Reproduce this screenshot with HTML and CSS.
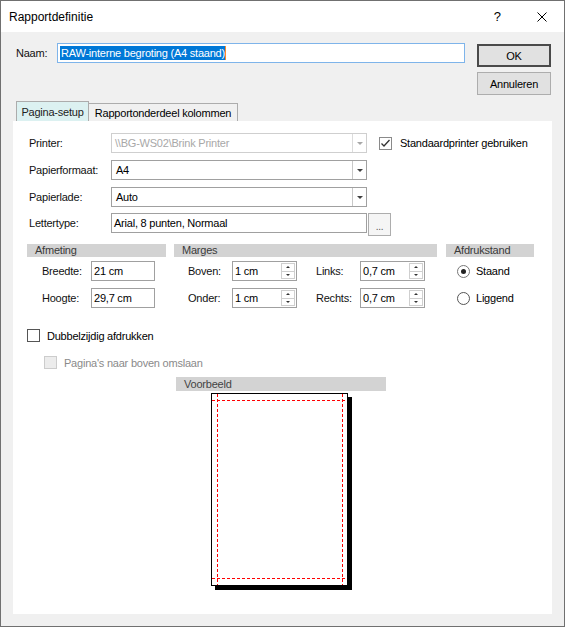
FILE: index.html
```html
<!DOCTYPE html>
<html>
<head>
<meta charset="utf-8">
<link rel="stylesheet" href="styles.css">
</head>
<body>
<div class="window">
  <div class="titlebar">
    <span class="title">Rapportdefinitie</span>
    <span class="help">?</span>
    <svg class="close" width="10" height="10" viewBox="0 0 10 10"><path d="M0.5 0.5 L9.5 9.5 M9.5 0.5 L0.5 9.5" stroke="#000" stroke-width="1"/></svg>
  </div>
  <div class="top">
    <div class="naam">
      <span class="naam-label">Naam:</span>
      <div class="naam-input"><span class="sel">RAW-interne begroting (A4 staand)</span><span class="caret"></span></div>
    </div>
    <div class="buttons">
      <div class="btn ok">OK</div>
      <div class="btn">Annuleren</div>
    </div>
  </div>
  <div class="tabs">
    <div class="tab active">Pagina-setup</div>
    <div class="tab second">Rapportonderdeel kolommen</div>
  </div>
  <div class="panel">
    <div class="field-row r1">
      <span class="lbl">Printer:</span>
      <div class="combo disabled"><span class="combo-text">\\BG-WS02\Brink Printer</span><span class="combo-btn"><i></i></span></div>
      <div class="chk std">
        <span class="box"><svg width="11" height="11" viewBox="0 0 11 11"><path d="M1.5 5.5 L4 8 L9.5 2" fill="none" stroke="#333" stroke-width="1.3"/></svg></span>
        <span class="chk-text">Standaardprinter gebruiken</span>
      </div>
    </div>
    <div class="field-row r2">
      <span class="lbl">Papierformaat:</span>
      <div class="combo"><span class="combo-text">A4</span><span class="combo-btn"><i></i></span></div>
    </div>
    <div class="field-row r3">
      <span class="lbl">Papierlade:</span>
      <div class="combo"><span class="combo-text">Auto</span><span class="combo-btn"><i></i></span></div>
    </div>
    <div class="field-row r4">
      <span class="lbl">Lettertype:</span>
      <div class="textbox font-box">Arial, 8 punten, Normaal</div>
      <div class="dots">...</div>
    </div>

    <div class="sections">
      <div class="sec afmeting">
        <div class="bar">Afmeting</div>
        <div class="srow first">
          <span class="slbl w64">Breedte:</span>
          <div class="textbox small">21 cm</div>
        </div>
        <div class="srow">
          <span class="slbl w64">Hoogte:</span>
          <div class="textbox small">29,7 cm</div>
        </div>
      </div>
      <div class="sec marges">
        <div class="bar">Marges</div>
        <div class="srow first">
          <span class="slbl w58">Boven:</span>
          <div class="spin"><span class="spin-text">1 cm</span><span class="spin-btns"><span class="up"><i></i></span><span class="down"><i></i></span></span></div>
          <span class="slbl2">Links:</span>
          <div class="spin"><span class="spin-text">0,7 cm</span><span class="spin-btns"><span class="up"><i></i></span><span class="down"><i></i></span></span></div>
        </div>
        <div class="srow">
          <span class="slbl w58">Onder:</span>
          <div class="spin"><span class="spin-text">1 cm</span><span class="spin-btns"><span class="up"><i></i></span><span class="down"><i></i></span></span></div>
          <span class="slbl2">Rechts:</span>
          <div class="spin"><span class="spin-text">0,7 cm</span><span class="spin-btns"><span class="up"><i></i></span><span class="down"><i></i></span></span></div>
        </div>
      </div>
      <div class="sec afdruk">
        <div class="bar">Afdrukstand</div>
        <div class="srow first">
          <span class="radio checked"><i></i></span><span class="radio-text">Staand</span>
        </div>
        <div class="srow">
          <span class="radio"></span><span class="radio-text">Liggend</span>
        </div>
      </div>
    </div>

    <div class="chk dubbel">
      <span class="box"></span>
      <span class="chk-text">Dubbelzijdig afdrukken</span>
    </div>
    <div class="chk omslaan">
      <span class="box dis"></span>
      <span class="chk-text dis-text">Pagina's naar boven omslaan</span>
    </div>

    <div class="preview">
      <div class="bar pbar">Voorbeeld</div>
      <div class="page">
        <svg width="135" height="191" viewBox="0 0 135 191">
          <g stroke="#ff0000" stroke-width="1" stroke-dasharray="3 2" fill="none">
            <line x1="0" y1="6.5" x2="135" y2="6.5"/>
            <line x1="0" y1="184.5" x2="135" y2="184.5"/>
            <line x1="5.5" y1="0" x2="5.5" y2="191"/>
            <line x1="130.5" y1="0" x2="130.5" y2="191"/>
          </g>
        </svg>
      </div>
    </div>
  </div>
</div>
</body>
</html>
```

FILE: styles.css
```css
* { box-sizing: border-box; }
html, body { margin: 0; padding: 0; background: #f0f0f0; }
body {
  font-family: "Liberation Sans", Arial, sans-serif;
  font-size: 11px;
  letter-spacing: -0.22px;
  color: #111;
}
.window {
  width: 565px;
  height: 627px;
  border: 1px solid #707070;
  background: #f0f0f0;
}
.titlebar {
  height: 31px;
  background: #fff;
  display: flex;
  align-items: center;
  letter-spacing: 0;
}
.title {
  flex: 1;
  padding-left: 8px;
  font-size: 12px;
  color: #000;
}
.help {
  font-size: 13px;
  margin-right: 36px;
  color: #000;
}
.close { margin-right: 17px; display: block; }

.top {
  display: flex;
  height: 69px;
  padding-left: 15px;
}
.naam {
  display: flex;
  align-items: center;
  margin-top: 11px;
  height: 20px;
}
.naam-label { width: 41px; }
.naam-input {
  width: 408px;
  height: 20px;
  border: 1px solid #7eb4ea;
  background: #fff;
  display: flex;
  align-items: center;
  padding-left: 2px;
}
.sel {
  background: #0078d7;
  color: #fff;
  line-height: 14px;
  padding: 0 0 0 1px;
}
.caret {
  display: inline-block;
  width: 1px;
  height: 14px;
  background: #ff8a28;
}
.buttons {
  margin-left: 12px;
  margin-top: 12px;
  display: flex;
  flex-direction: column;
  gap: 5px;
}
.btn {
  width: 74px;
  height: 23px;
  border: 1px solid #adadad;
  background: #e1e1e1;
  display: flex;
  align-items: center;
  justify-content: center;
  color: #000;
}
.btn.ok {
  border: 2px solid #4a4a4a;
}

.tabs {
  display: flex;
  align-items: flex-end;
  height: 20px;
  padding-left: 15px;
}
.tab {
  border: 1px solid #acacac;
  border-bottom: none;
  display: flex;
  align-items: center;
  justify-content: center;
  color: #000;
}
.tab.active {
  width: 73px;
  height: 20px;
  background: #dcf1f1;
  color: #222;
}
.tab.second {
  width: 149px;
  height: 18px;
  border-left: none;
  background: #f0f0f0;
}

.panel {
  margin-left: 12px;
  width: 539px;
  height: 493px;
  background: #fff;
  padding-top: 12px;
  padding-left: 14px;
}
.field-row {
  display: flex;
  align-items: center;
  height: 20px;
  padding-left: 2px;
}
.r2, .r3 { margin-top: 7px; }
.r4 { margin-top: 6px; align-items: flex-start; height: 23px; }
.r4 .lbl { line-height: 20px; }
.lbl { width: 82px; }
.combo {
  width: 256px;
  height: 20px;
  border: 1px solid #a0a0a0;
  background: #fff;
  display: flex;
  align-items: stretch;
}
.combo-text {
  flex: 1;
  display: flex;
  align-items: center;
  padding-left: 4px;
  color: #000;
}
.combo-btn {
  width: 14px;
  border-left: 1px solid #c8c8c8;
  display: flex;
  align-items: center;
  justify-content: center;
}
.combo-btn i {
  width: 0;
  height: 0;
  border-left: 3px solid transparent;
  border-right: 3px solid transparent;
  border-top: 3px solid #404040;
}
.combo.disabled { border-color: #cfcfcf; }
.combo.disabled .combo-text { color: #a8a8a8; padding-left: 3px; }
.combo.disabled .combo-btn { border-left-color: #dcdcdc; }
.combo.disabled .combo-btn i { border-top-color: #a8a8a8; }

.textbox {
  height: 20px;
  border: 1px solid #a0a0a0;
  background: #fff;
  display: flex;
  align-items: center;
  padding-left: 2px;
  color: #000;
}
.font-box { width: 256px; }
.dots {
  margin-left: 1px;
  width: 23px;
  height: 23px;
  border: 1px solid #adadad;
  background: #f5f5f5;
  display: flex;
  align-items: flex-end;
  justify-content: center;
  padding-bottom: 3px;
  font-size: 10px;
  color: #555;
}

.chk {
  display: flex;
  align-items: center;
}
.box {
  width: 13px;
  height: 13px;
  border: 1px solid #555;
  background: #fff;
  display: flex;
  align-items: center;
  justify-content: center;
}
.chk-text { margin-left: 7px; color: #000; }
.std { margin-left: 12px; }
.std .box { border-color: #8a8a8a; }
.std .chk-text { margin-left: 8px; }

.sections {
  display: flex;
  margin-top: 8px;
}
.sec { display: flex; flex-direction: column; }
.afmeting { width: 139px; }
.marges { width: 263px; margin-left: 8px; }
.afdruk { width: 88px; margin-left: 9px; }
.bar {
  height: 13px;
  line-height: 13px;
  background: #d3d3d3;
  padding-left: 8px;
  color: #3a3a3a;
}
.srow {
  display: flex;
  align-items: center;
  height: 20px;
  margin-top: 7px;
}
.srow.first { margin-top: 4px; }
.slbl { padding-left: 15px; }
.w64 { width: 64px; }
.w58 { width: 58px; padding-left: 14px; }
.textbox.small { width: 64px; }
.slbl2 { width: 44px; margin-left: 19px; }
.spin {
  width: 65px;
  height: 20px;
  border: 1px solid #a0a0a0;
  background: #fff;
  display: flex;
  color: #000;
}
.spin-text {
  flex: 1;
  display: flex;
  align-items: center;
  padding-left: 2px;
}
.spin-btns {
  width: 14px;
  margin: 1px 1px 1px 0;
  border: 1px solid #cfcfcf;
  display: flex;
  flex-direction: column;
}
.spin-btns span {
  flex: 1;
  display: flex;
  align-items: center;
  justify-content: center;
}
.spin-btns .up { border-bottom: 1px solid #cfcfcf; }
.spin-btns .up i {
  width: 0; height: 0;
  border-left: 2px solid transparent;
  border-right: 2px solid transparent;
  border-bottom: 2px solid #333;
}
.spin-btns .down i {
  width: 0; height: 0;
  border-left: 2px solid transparent;
  border-right: 2px solid transparent;
  border-top: 2px solid #333;
}

.radio {
  margin-left: 11px;
  width: 13px;
  height: 13px;
  border: 1px solid #555;
  border-radius: 50%;
  background: #fff;
  display: flex;
  align-items: center;
  justify-content: center;
}
.radio.checked { border-color: #777; }
.radio i {
  width: 5px;
  height: 5px;
  border-radius: 50%;
  background: #222;
}
.radio-text { margin-left: 6px; color: #000; }

.dubbel { margin-top: 21px; height: 13px; }
.omslaan { margin-top: 14px; margin-left: 17px; height: 13px; }
.box.dis { border-color: #cccccc; background: #ececec; }
.dis-text { color: #8a8a8a; }

.preview {
  margin-top: 8px;
  margin-left: 149px;
  width: 210px;
}
.pbar { height: 14px; line-height: 14px; color: #444; }
.page {
  margin-top: 2px;
  margin-left: 35px;
  width: 137px;
  height: 193px;
  border: 1px solid #000;
  background: #fff;
  box-shadow: 4px 4px 0 #000;
}
.page svg { display: block; }
```
